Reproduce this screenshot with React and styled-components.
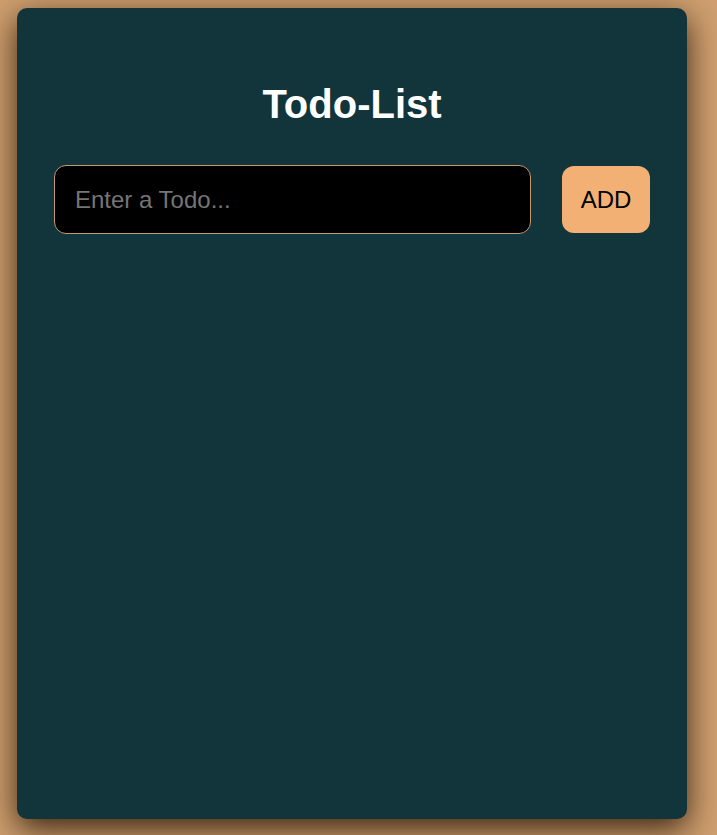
import React from 'react';
import styled, { createGlobalStyle } from 'styled-components';

const GlobalStyle = createGlobalStyle`
  html, body {
    margin: 0;
    padding: 0;
    background: #cf9f6f;
    font-family: "Liberation Sans", Arial, sans-serif;
  }
`;

const Page = styled.div`
  min-height: 835px;
  box-sizing: border-box;
  padding: 8px 0 0 17px;
`;

const Card = styled.div`
  width: 670px;
  height: 811px;
  box-sizing: border-box;
  padding: 37px;
  background: #12343b;
  border-radius: 10px;
  box-shadow: 0 10px 32px rgba(30, 15, 0, 0.85);
`;

const Title = styled.h1`
  margin: 37px 0 38px;
  text-align: center;
  color: #ffffff;
  font-size: 40px;
  font-weight: bold;
`;

const Row = styled.div`
  display: flex;
  align-items: center;
  gap: 31px;
`;

const Input = styled.input`
  flex: 1;
  height: 69px;
  box-sizing: border-box;
  padding: 0 20px;
  background: #000;
  border: 1px solid #c49a6c;
  border-radius: 12px;
  color: #fff;
  font-family: "Liberation Sans", Arial, sans-serif;
  font-size: 24px;
  outline: none;
  &::placeholder {
    color: #757575;
  }
`;

const AddButton = styled.button`
  width: 88px;
  height: 67px;
  border: none;
  border-radius: 12px;
  background: #f2b074;
  color: #000;
  font-family: "Liberation Sans", Arial, sans-serif;
  font-size: 24px;
  cursor: pointer;
`;

export default function App() {
  return (
    <>
      <GlobalStyle />
      <Page>
        <Card>
          <Title>Todo-List</Title>
          <Row>
            <Input placeholder='Enter a Todo...' />
            <AddButton>ADD</AddButton>
          </Row>
        </Card>
      </Page>
    </>
  );
}
